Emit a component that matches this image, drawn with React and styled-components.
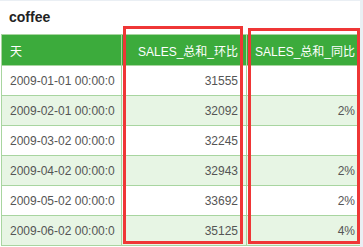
import React from 'react'
import styled, { createGlobalStyle } from 'styled-components'

const GlobalStyle = createGlobalStyle`
  html, body {
    margin: 0;
    padding: 0;
    background: #eaeff4;
  }
`

const Panel = styled.div`
  position: relative;
  margin-top: 1px;
  width: 360px;
  height: 246px;
  background: #fff;
  overflow: hidden;
  font-family: "Liberation Sans", "Noto Sans CJK SC", sans-serif;
`

const Title = styled.div`
  height: 33px;
  box-sizing: border-box;
  padding: 8px 0 0 9px;
  font-size: 14px;
  line-height: 16px;
  font-weight: bold;
  color: #222;
`

const Table = styled.table`
  margin-left: 1px;
  width: 362px;
  table-layout: fixed;
  border-collapse: collapse;
  font-size: 12px;
`

const HeadCell = styled.th`
  height: 30px;
  padding: 0 8px;
  background: #3cab3c;
  color: #fff;
  font-weight: normal;
  text-align: ${p => (p.$right ? 'right' : 'left')};
  border: 1px solid #a8d5a0;
  white-space: nowrap;
`

const Row = styled.tr`
  background: ${p => (p.$alt ? '#e7f5e4' : '#fff')};
`

const Cell = styled.td`
  height: 29px;
  padding: 0 8px;
  color: #555;
  text-align: ${p => (p.$right ? 'right' : 'left')};
  border: 1px solid #a8d5a0;
  white-space: nowrap;
`

const Mark = styled.div`
  position: absolute;
  border: 3px solid #ef3636;
  box-sizing: border-box;
  pointer-events: none;
`

// the day column is narrow, so the dashboard only shows the start of the timestamp
const rows = [
  ['2009-01-01 00:00:0', '31555', ''],
  ['2009-02-01 00:00:0', '32092', '2%'],
  ['2009-03-02 00:00:0', '32245', ''],
  ['2009-04-02 00:00:0', '32943', '2%'],
  ['2009-05-02 00:00:0', '33692', '2%'],
  ['2009-06-02 00:00:0', '35125', '4%']
]

export default function App() {
  return (
    <>
      <GlobalStyle />
      <Panel>
        <Title>coffee</Title>
        <Table>
          <colgroup>
            <col style={{ width: 120 }} />
            <col style={{ width: 125 }} />
            <col style={{ width: 117 }} />
          </colgroup>
          <thead>
            <tr>
              <HeadCell>天</HeadCell>
              <HeadCell $right>SALES_总和_环比</HeadCell>
              <HeadCell $right>SALES_总和_同比</HeadCell>
            </tr>
          </thead>
          <tbody>
            {rows.map((r, i) => (
              <Row key={r[0]} $alt={i % 2 === 1}>
                <Cell>{r[0]}</Cell>
                <Cell $right>{r[1]}</Cell>
                <Cell $right>{r[2]}</Cell>
              </Row>
            ))}
          </tbody>
        </Table>
        <Mark style={{ left: 123, top: 25, width: 120, height: 218 }} />
        <Mark style={{ left: 248, top: 27, width: 112, height: 216 }} />
      </Panel>
    </>
  )
}
